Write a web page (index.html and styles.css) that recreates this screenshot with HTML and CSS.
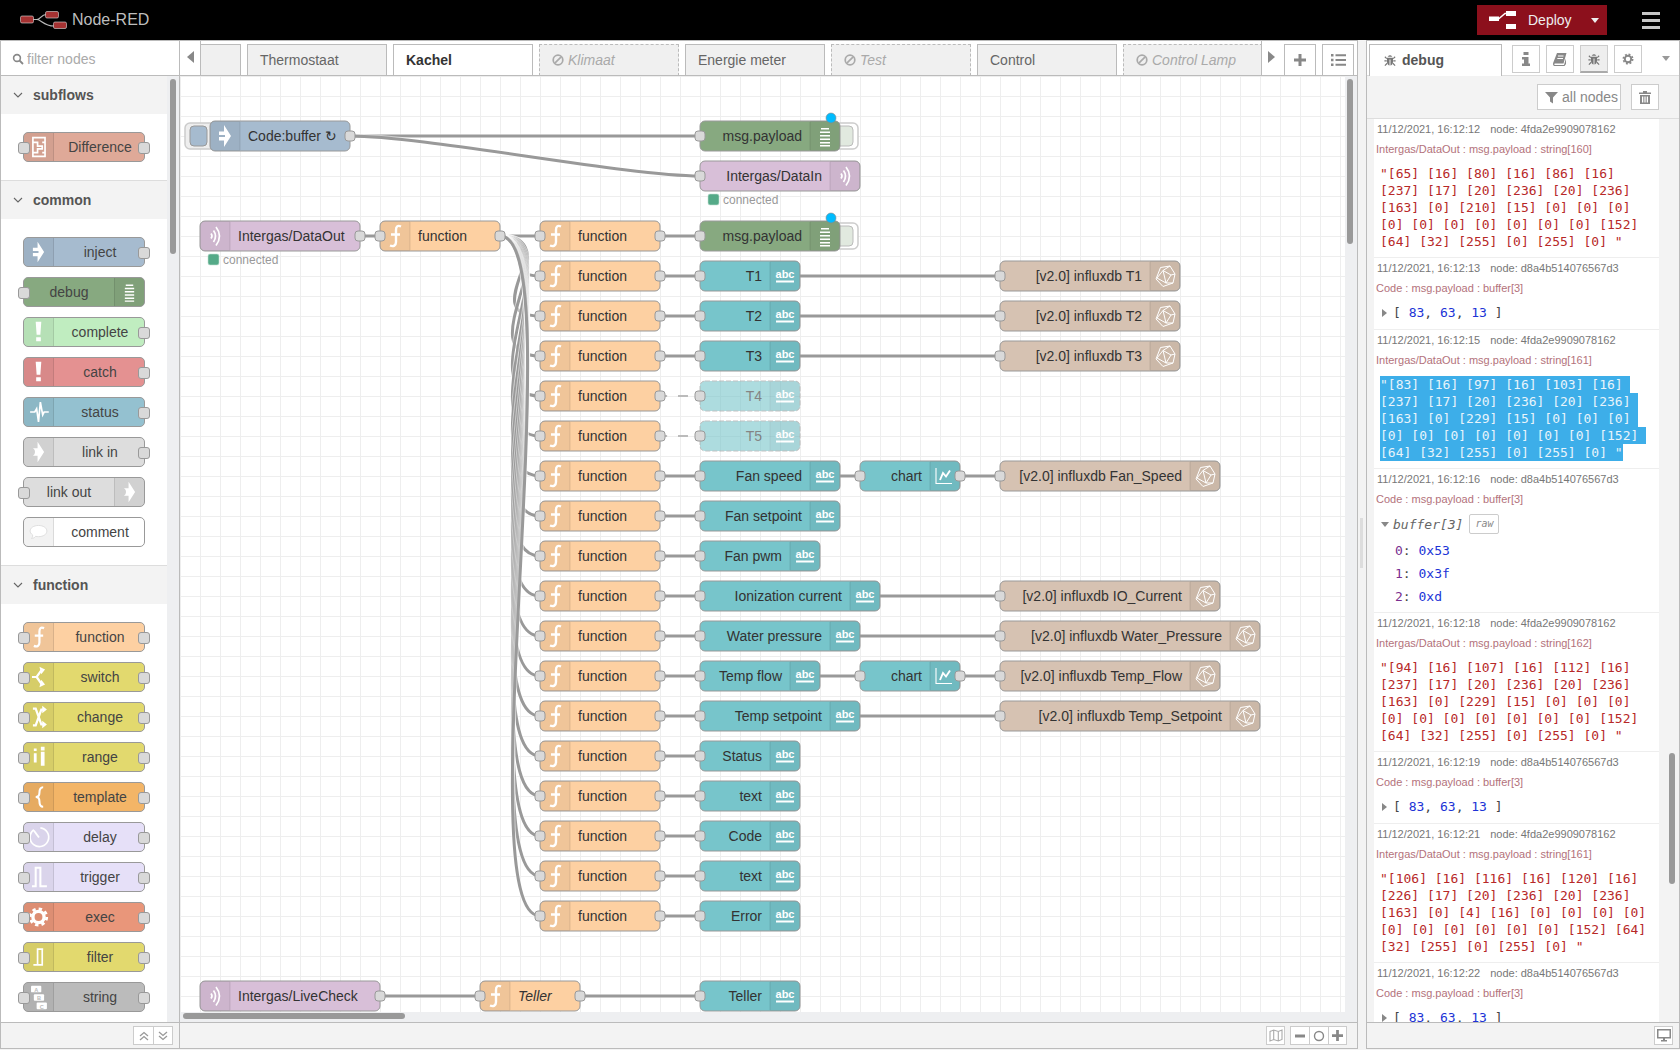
FILE: index.html
```html
<!DOCTYPE html>
<html lang="en">
<head>
  <meta charset="UTF-8">
  <title>Node-RED</title>
  <link rel="stylesheet" href="styles.css">
</head>
<body>
  <svg class="defs" width="0" height="0">
    <defs>
      <symbol id="i-inject" viewBox="0 0 30 30"><path d="M14 4 L21 15 L14 26 V19.5 H9 V16 H15 V14 H9 V10.5 H14 Z" fill="#fff"/></symbol>
      <symbol id="i-debug" viewBox="0 0 30 30"><path d="M11 7h8v1.5h-8zM10 10.5h10V12H10zM10 14h10v1.5H10zM10 17.5h10V19H10zM10 21h10v1.5H10zM10 24h10v1.5H10z" fill="#fff"/></symbol>
      <symbol id="i-alert" viewBox="0 0 30 30"><path d="M12 4h6l-1 14h-4zM12.5 20.5h5V25h-5z" fill="#fff"/></symbol>
      <symbol id="i-status" viewBox="0 0 30 30"><path d="M6 15H11L13 11.5L15 25.5L17 4.5L19.5 18L21 15H26" fill="none" stroke="#fff" stroke-width="1.8"/></symbol>
      <symbol id="i-link" viewBox="0 0 30 30"><path d="M14 4 L21 15 L14 26 V19 H9 C12 17.5 12 12.5 9 11 H14 Z" fill="#fff"/></symbol>
      <symbol id="i-comment" viewBox="0 0 30 30"><path d="M15 8C20 8 24 10.5 24 14C24 17.5 20 20 15 20C14 20 13 20 12 19.6C11 21 9 22 7.5 22C8.5 21 9 19.5 8.6 18C7 17 6 15.5 6 14C6 10.5 10 8 15 8Z" fill="#fff" stroke="#ddd"/></symbol>
      <symbol id="i-func" viewBox="0 0 30 30"><path d="M21 5.500C17.500 4 16 5.500 16 9V21C16 24.500 13.500 26 10 24.500M11 13.500H20" fill="none" stroke="#fff" stroke-width="2.400"/></symbol>
      <symbol id="i-switch" viewBox="0 0 30 30"><path d="M8 15H13L18 8M13 15L18 22" fill="none" stroke="#fff" stroke-width="2.4"/><path d="M16 4L22 7L18 12ZM16 26L22 23L18 18Z" fill="#fff"/></symbol>
      <symbol id="i-change" viewBox="0 0 30 30"><path d="M9 6L12 6L18 23L20 23M9 24L12 24L18 7L20 7" fill="none" stroke="#fff" stroke-width="2.4"/><path d="M19 3L24 7L19 11ZM19 19L24 23L19 27Z" fill="#fff"/></symbol>
      <symbol id="i-range" viewBox="0 0 30 30"><path d="M10 6h3v2.5h-3zM10 11h3v10h-3zM17.5 4h4v4h-4zM17.5 9.500h4V24.500h-4z" fill="#fff"/></symbol>
      <symbol id="i-template" viewBox="0 0 30 30"><path d="M20 4.500C16.500 4.500 16 7.500 16 10.500C16 13.500 15 15 12 15C15 15 16 16.500 16 19.500C16 22.500 16.500 25.500 20 25.500" fill="none" stroke="#fff" stroke-width="2.2"/></symbol>
      <symbol id="i-delay" viewBox="0 0 30 30"><path d="M10 7.200A10 10 0 1 0 17 5.300" fill="none" stroke="#fff" stroke-width="1.800"/><path d="M15.500 15.500L10 8" fill="none" stroke="#fff" stroke-width="2"/></symbol>
      <symbol id="i-trigger" viewBox="0 0 30 30"><path d="M8 25H12V5H17V25H24" fill="none" stroke="#fff" stroke-width="2.200"/></symbol>
      <symbol id="i-gear" viewBox="0 0 30 30"><circle cx="15" cy="15" r="6" fill="none" stroke="currentColor" stroke-width="3.600"/><circle cx="15" cy="15" r="8.800" fill="none" stroke="currentColor" stroke-width="3" stroke-dasharray="3.600 3.300"/></symbol>
      <symbol id="i-filter" viewBox="0 0 30 30"><path d="M9.500 23.500H14V6.500H20M19 6.500V23.500H14" fill="none" stroke="#fff" stroke-width="1.800"/></symbol>
      <symbol id="i-string" viewBox="0 0 30 30">
        <rect x="7" y="3" width="11" height="7" rx="1" fill="#fff"/><rect x="10" y="12" width="11" height="7" rx="1" fill="#fff"/><rect x="13" y="21" width="11" height="7" rx="1" fill="#fff"/>
        <text x="12.500" y="9.500" text-anchor="middle" class="abc-small">A</text><text x="15.500" y="18.500" text-anchor="middle" class="abc-small">B</text><text x="18.500" y="27.500" text-anchor="middle" class="abc-small">C</text>
      </symbol>
      <symbol id="i-subflow" viewBox="0 0 30 30"><path d="M9 5H22V25H9ZM9 10H14V14H19V17H14V21H9M19 10H22M19 21H22" fill="none" stroke="#fff" stroke-width="1.800"/></symbol>
      <symbol id="i-mqtt" viewBox="0 0 30 30"><path d="M11 12.500Q13 15 11 17.500M13.500 9.500Q17.500 15 13.500 21M16 6Q23 15 16 24.500" fill="none" stroke="#fff" stroke-width="1.700"/></symbol>
      <symbol id="i-text" viewBox="0 0 30 30"><text x="15" y="17" text-anchor="middle" class="abc">abc</text><rect x="6" y="19.500" width="18" height="2" fill="#fff"/></symbol>
      <symbol id="i-chart" viewBox="0 0 30 30"><path d="M6 7V22.500H22" fill="none" stroke="#fff" stroke-width="1.100"/><path d="M10 19L13 12L16 15.500L20 9.500" fill="none" stroke="#fff" stroke-width="1.900"/></symbol>
      <symbol id="i-influx" viewBox="0 0 30 30"><path d="M10.500 6.500L20 5L25 13L23 22L13 25.500L6 18ZM13 9.500L21 14L16 22L7 17ZM13 9.500L20 5M21 14L25 13M16 22L23 22M13 9.500L16 22" fill="none" stroke="#fff" stroke-width="1"/></symbol>
      <symbol id="i-bug" viewBox="0 0 30 30"><path d="M10 8Q15 2 20 8ZM8.500 10H21.500V19C21.500 24 18 27 16 27V14H14V27C12 27 8.500 24 8.500 19Z" fill="currentColor"/><path d="M8 12L4 8M22 12L26 8M8 17H3M22 17H27M9 22L4 27M21 22L26 27" fill="none" stroke="currentColor" stroke-width="2.400"/></symbol>
      <symbol id="i-ban" viewBox="0 0 12 12"><circle cx="6" cy="6" r="4.800" fill="none" stroke="currentColor" stroke-width="1.700"/><path d="M2.800 9.200L9.200 2.800" stroke="currentColor" stroke-width="1.700"/></symbol>
    </defs>
  </svg>

  <header class="topbar">
    <div class="brand">
      <svg width="48" height="18" viewBox="0 0 48 18">
        <path d="M13 8.500H17C21 8.500 21 3.500 26 3.500M17 8.500C21 8.500 24 15 34 15" fill="none" stroke="#bbb" stroke-width="1.200"/>
        <rect x="0.500" y="5" width="13" height="7" rx="1.500" fill="#a53232" stroke="#ddd" stroke-width=".6"/>
        <rect x="25.500" y="0.500" width="13" height="6.500" rx="1.500" fill="#a53232" stroke="#ddd" stroke-width=".6"/>
        <rect x="33.500" y="11" width="13" height="6.500" rx="1.500" fill="#a53232" stroke="#ddd" stroke-width=".6"/>
      </svg>
      <span>Node-RED</span>
    </div>
    <div class="top-actions">
      <div class="deploy">
        <svg width="28" height="18" viewBox="0 0 28 18"><path d="M0 5.500H10V10H0ZM17 0H27V5H17ZM17 13H27V18H17Z" fill="#fff"/><path d="M9.500 8L16 2.500H18" fill="none" stroke="#fff" stroke-width="1.500"/></svg>
        <span class="deploy-label">Deploy</span>
        <i class="caret-down"></i>
      </div>
      <div class="menu-btn"><i></i><i></i><i></i></div>
    </div>
  </header>

  <main class="main">
    <aside class="palette">
      <div class="palette-search">
        <svg width="12" height="12" viewBox="0 0 12 12"><circle cx="5" cy="5" r="3.400" fill="none" stroke="#888" stroke-width="1.600"/><path d="M7.500 7.500L11 11" stroke="#888" stroke-width="1.800"/></svg>
        <input type="text" placeholder="filter nodes">
      </div>
      <div class="palette-body">
        <div class="palette-list">
          <h3 class="cat-head"><svg width="10" height="6" viewBox="0 0 10 6"><path d="M1 1L5 5L9 1" fill="none" stroke="#666" stroke-width="1.100"/></svg>subflows</h3>
          <div class="cat-nodes">
            <div class="pnode c-subflow in out"><div class="pnode-icon"><svg><use href="#i-subflow"/></svg></div><span>Difference</span></div>
          </div>
          <h3 class="cat-head"><svg width="10" height="6" viewBox="0 0 10 6"><path d="M1 1L5 5L9 1" fill="none" stroke="#666" stroke-width="1.100"/></svg>common</h3>
          <div class="cat-nodes">
            <div class="pnode c-inject out"><div class="pnode-icon"><svg><use href="#i-inject"/></svg></div><span>inject</span></div>
            <div class="pnode c-debug in rev"><div class="pnode-icon"><svg><use href="#i-debug"/></svg></div><span>debug</span></div>
            <div class="pnode c-complete out"><div class="pnode-icon"><svg><use href="#i-alert"/></svg></div><span>complete</span></div>
            <div class="pnode c-catch out"><div class="pnode-icon"><svg><use href="#i-alert"/></svg></div><span>catch</span></div>
            <div class="pnode c-status out"><div class="pnode-icon"><svg><use href="#i-status"/></svg></div><span>status</span></div>
            <div class="pnode c-link out"><div class="pnode-icon"><svg><use href="#i-link"/></svg></div><span>link in</span></div>
            <div class="pnode c-link in rev"><div class="pnode-icon"><svg><use href="#i-link"/></svg></div><span>link out</span></div>
            <div class="pnode c-comment"><div class="pnode-icon"><svg><use href="#i-comment"/></svg></div><span>comment</span></div>
          </div>
          <h3 class="cat-head"><svg width="10" height="6" viewBox="0 0 10 6"><path d="M1 1L5 5L9 1" fill="none" stroke="#666" stroke-width="1.100"/></svg>function</h3>
          <div class="cat-nodes">
            <div class="pnode c-function in out"><div class="pnode-icon"><svg><use href="#i-func"/></svg></div><span>function</span></div>
            <div class="pnode c-switch in out"><div class="pnode-icon"><svg><use href="#i-switch"/></svg></div><span>switch</span></div>
            <div class="pnode c-switch in out"><div class="pnode-icon"><svg><use href="#i-change"/></svg></div><span>change</span></div>
            <div class="pnode c-switch in out"><div class="pnode-icon"><svg><use href="#i-range"/></svg></div><span>range</span></div>
            <div class="pnode c-template in out"><div class="pnode-icon"><svg><use href="#i-template"/></svg></div><span>template</span></div>
            <div class="pnode c-delay in out"><div class="pnode-icon"><svg><use href="#i-delay"/></svg></div><span>delay</span></div>
            <div class="pnode c-delay in out"><div class="pnode-icon"><svg><use href="#i-trigger"/></svg></div><span>trigger</span></div>
            <div class="pnode c-exec in out"><div class="pnode-icon"><svg><use href="#i-gear"/></svg></div><span>exec</span></div>
            <div class="pnode c-switch in out"><div class="pnode-icon"><svg><use href="#i-filter"/></svg></div><span>filter</span></div>
            <div class="pnode c-string in out"><div class="pnode-icon"><svg><use href="#i-string"/></svg></div><span>string</span></div>
            <div class="pnode c-string"></div>
          </div>
        </div>
        <div class="thumb palette-thumb"></div>
      </div>
      <div class="panel-footer">
        <div class="btn-group">
          <div class="foot-btn"><svg width="10" height="10" viewBox="0 0 10 10"><path d="M1 5L5 1.500L9 5M1 9L5 5.500L9 9" fill="none" stroke="#999" stroke-width="1.300"/></svg></div>
          <div class="foot-btn"><svg width="10" height="10" viewBox="0 0 10 10"><path d="M1 1L5 4.500L9 1M1 5L5 8.500L9 5" fill="none" stroke="#999" stroke-width="1.300"/></svg></div>
        </div>
      </div>
    </aside>

    <section class="workspace">
      <div class="tabs-row">
        <div class="tab-scroll"><i class="arrow-left"></i></div>
        <div class="tabs">
          <div class="tab tab-cut"></div>
          <div class="tab">Thermostaat</div>
          <div class="tab active">Kachel</div>
          <div class="tab off"><svg width="12" height="12"><use href="#i-ban"/></svg>Klimaat</div>
          <div class="tab">Energie meter</div>
          <div class="tab off"><svg width="12" height="12"><use href="#i-ban"/></svg>Test</div>
          <div class="tab">Control</div>
          <div class="tab off"><svg width="12" height="12"><use href="#i-ban"/></svg>Control Lamp</div>
        </div>
        <div class="tab-scroll right"><i class="arrow-right"></i></div>
        <div class="tab-btn"><svg width="12" height="12" viewBox="0 0 12 12"><path d="M4.500 0h3v4.500H12v3H7.500V12h-3V7.500H0v-3h4.500z" fill="#888"/></svg></div>
        <div class="tab-btn"><svg width="15" height="12" viewBox="0 0 15 12"><path d="M0 0h2.500v2.500H0zM0 4.700h2.500v2.500H0zM0 9.400h2.500v2.500H0zM4.500 .300H15v2H4.500zM4.500 5H15v2H4.500zM4.500 9.700H15v2H4.500z" fill="#888"/></svg></div>
      </div>
      <div class="canvas-wrap">
        <svg id="flow" class="flow" width="1165" height="936" viewBox="180 76 1165 936"></svg>
        <div class="thumb canvas-vthumb"></div>
        <div class="thumb canvas-hthumb"></div>
      </div>
      <div class="panel-footer workspace-footer">
        <div class="foot-btn solo"><svg width="14" height="13" viewBox="0 0 14 13"><path d="M1 2.500L4.700 1L9.300 2.500L13 1V10.500L9.300 12L4.700 10.500L1 12ZM4.700 1V10.500M9.300 2.500V12" fill="none" stroke="#aaa" stroke-width="1.100"/></svg></div>
        <div class="btn-group zoom-group">
          <div class="foot-btn"><svg width="10" height="10" viewBox="0 0 10 10"><path d="M0 3.500h10v3H0z" fill="#888"/></svg></div>
          <div class="foot-btn"><svg width="12" height="12" viewBox="0 0 12 12"><circle cx="6" cy="6" r="4.500" fill="none" stroke="#888" stroke-width="1.400"/></svg></div>
          <div class="foot-btn"><svg width="11" height="11" viewBox="0 0 12 12"><path d="M4.500 0h3v4.500H12v3H7.500V12h-3V7.500H0v-3h4.500z" fill="#888"/></svg></div>
        </div>
      </div>
    </section>

    <div class="separator"><div class="separator-handle"></div></div>

    <aside class="sidebar">
      <div class="side-tabs">
        <div class="side-tab"><svg width="14" height="14" color="#777"><use href="#i-bug"/></svg>debug</div>
        <div class="side-btns">
          <div class="side-btn"><svg width="10" height="14" viewBox="0 0 10 14"><path d="M2.500 0h5v3h-5zM1 5h6.500v6.500H9V14H1v-2.500h2V7.500H1z" fill="#888"/></svg></div>
          <div class="side-btn"><svg width="14" height="14" viewBox="0 0 14 14"><path d="M4 1H13.500L10.500 11.500H2C1 11.500 1 13 2 13H11L13 6.500V12L11.500 14H2C0 14 -.5 12 .5 10Z" fill="#888"/><path d="M5 4H10.500M4.300 6.500H10" stroke="#fff"/></svg></div>
          <div class="side-btn current"><svg width="14" height="14" color="#777"><use href="#i-bug"/></svg></div>
          <div class="side-btn"><svg width="16" height="16"><use href="#i-gear"/></svg></div>
          <i class="caret-side"></i>
        </div>
      </div>
      <div class="debug-toolbar">
        <div class="tool-btn">
          <svg width="13" height="13" viewBox="0 0 13 13"><path d="M0 1H13L8 6.500V12.500L5 10.500V6.500Z" fill="#888"/></svg>
          <span>all nodes</span>
        </div>
        <div class="tool-btn trash">
          <svg width="12" height="13" viewBox="0 0 12 13"><path d="M4 0H8V1.500H12V3H0V1.500H4ZM1 4H11V13H1ZM3 5.500V11.500H4.300V5.500ZM5.400 5.500V11.500H6.600V5.500ZM7.700 5.500V11.500H9V5.500Z" fill="#888" fill-rule="evenodd"/></svg>
        </div>
      </div>
      <div class="debug-wrap">
        <div class="debug-list">
          <div class="msg">
            <div class="msg-meta"><span>11/12/2021, 16:12:12</span><span>node: 4fda2e9909078162</span></div>
            <div class="msg-name">Intergas/DataOut : msg.payload : string[160]</div>
            <div class="msg-body str">
              <div>"[65] [16] [80] [16] [86] [16]</div>
              <div>[237] [17] [20] [236] [20] [236]</div>
              <div>[163] [0] [210] [15] [0] [0] [0]</div>
              <div>[0] [0] [0] [0] [0] [0] [0] [152]</div>
              <div>[64] [32] [255] [0] [255] [0] "</div>
            </div>
          </div>
          <div class="msg">
            <div class="msg-meta"><span>11/12/2021, 16:12:13</span><span>node: d8a4b514076567d3</span></div>
            <div class="msg-name">Code : msg.payload : buffer[3]</div>
            <div class="msg-body arr"><i class="caret-right"></i>[ <b>83</b>, <b>63</b>, <b>13</b> ]</div>
          </div>
          <div class="msg">
            <div class="msg-meta"><span>11/12/2021, 16:12:15</span><span>node: 4fda2e9909078162</span></div>
            <div class="msg-name">Intergas/DataOut : msg.payload : string[161]</div>
            <div class="msg-body str picked">
              <div>"[83] [16] [97] [16] [103] [16] </div>
              <div>[237] [17] [20] [236] [20] [236] </div>
              <div>[163] [0] [229] [15] [0] [0] [0] </div>
              <div>[0] [0] [0] [0] [0] [0] [0] [152] </div>
              <div>[64] [32] [255] [0] [255] [0] "</div>
            </div>
          </div>
          <div class="msg">
            <div class="msg-meta"><span>11/12/2021, 16:12:16</span><span>node: d8a4b514076567d3</span></div>
            <div class="msg-name">Code : msg.payload : buffer[3]</div>
            <div class="msg-body buf">
              <div class="buf-head"><i class="caret-open"></i><em>buffer[3]</em><span class="raw-btn">raw</span></div>
              <div class="buf-row"><u>0</u>: <b>0x53</b></div>
              <div class="buf-row"><u>1</u>: <b>0x3f</b></div>
              <div class="buf-row"><u>2</u>: <b>0xd</b></div>
            </div>
          </div>
          <div class="msg">
            <div class="msg-meta"><span>11/12/2021, 16:12:18</span><span>node: 4fda2e9909078162</span></div>
            <div class="msg-name">Intergas/DataOut : msg.payload : string[162]</div>
            <div class="msg-body str">
              <div>"[94] [16] [107] [16] [112] [16]</div>
              <div>[237] [17] [20] [236] [20] [236]</div>
              <div>[163] [0] [229] [15] [0] [0] [0]</div>
              <div>[0] [0] [0] [0] [0] [0] [0] [152]</div>
              <div>[64] [32] [255] [0] [255] [0] "</div>
            </div>
          </div>
          <div class="msg">
            <div class="msg-meta"><span>11/12/2021, 16:12:19</span><span>node: d8a4b514076567d3</span></div>
            <div class="msg-name">Code : msg.payload : buffer[3]</div>
            <div class="msg-body arr"><i class="caret-right"></i>[ <b>83</b>, <b>63</b>, <b>13</b> ]</div>
          </div>
          <div class="msg">
            <div class="msg-meta"><span>11/12/2021, 16:12:21</span><span>node: 4fda2e9909078162</span></div>
            <div class="msg-name">Intergas/DataOut : msg.payload : string[161]</div>
            <div class="msg-body str">
              <div>"[106] [16] [116] [16] [120] [16]</div>
              <div>[226] [17] [20] [236] [20] [236]</div>
              <div>[163] [0] [4] [16] [0] [0] [0] [0]</div>
              <div>[0] [0] [0] [0] [0] [0] [152] [64]</div>
              <div>[32] [255] [0] [255] [0] "</div>
            </div>
          </div>
          <div class="msg">
            <div class="msg-meta"><span>11/12/2021, 16:12:22</span><span>node: d8a4b514076567d3</span></div>
            <div class="msg-name">Code : msg.payload : buffer[3]</div>
            <div class="msg-body arr"><i class="caret-right"></i>[ <b>83</b>, <b>63</b>, <b>13</b> ]</div>
          </div>
        </div>
        <div class="thumb debug-thumb"></div>
      </div>
      <div class="panel-footer side-footer">
        <div class="foot-btn solo"><svg width="14" height="13" viewBox="0 0 14 13"><path d="M0 0H14V9.500H0ZM1.500 1.500V8H12.500V1.500ZM4 11H10V12.500H4ZM6 9.500H8V11H6Z" fill="#888" fill-rule="evenodd"/></svg></div>
      </div>
    </aside>
  </main>

  <script src="flow.js"></script>
</body>
</html>
```

FILE: styles.css
```css
* { box-sizing: border-box; }
body {
  margin: 0;
  height: 1050px;
  overflow: hidden;
  background: #f3f3f3;
  font-family: "Liberation Sans", Arial, sans-serif;
  font-size: 14px;
  color: #333;
}
.defs { position: absolute; }
.abc { font: bold 11px "Liberation Sans", Arial, sans-serif; fill: #fff; }
.abc-small { font: bold 6px "Liberation Sans", Arial, sans-serif; fill: #bbb; }

/* header */
.topbar {
  height: 40px;
  background: #000;
  display: flex;
  justify-content: space-between;
  align-items: center;
}
.brand {
  display: flex;
  align-items: center;
  gap: 4px;
  padding-left: 20px;
  color: #bdbdbd;
  font-size: 16px;
}
.top-actions { display: flex; align-items: center; }
.deploy {
  width: 130px;
  height: 30px;
  background: #8c101c;
  color: #eee;
  display: flex;
  align-items: center;
  padding-left: 12px;
}
.deploy-label { margin-left: 11px; }
.caret-down {
  margin-left: 19px;
  border: 4px solid transparent;
  border-top: 5px solid #eee;
  border-bottom: 0;
}
.menu-btn { width: 18px; margin: 0 20px 0 35px; }
.menu-btn i { display: block; height: 3px; margin: 4px 0; background: #c7c7c7; }

.main { display: flex; height: 1009px; }

/* palette */
.palette {
  width: 180px;
  display: flex;
  flex-direction: column;
  background: #eeeff1;
  border: 1px solid #bbb;
}
.palette-search {
  height: 35px;
  flex: none;
  background: #fff;
  border-bottom: 1px solid #bbb;
  display: flex;
  align-items: center;
  padding: 2px 0 0 11px;
}
.palette-search input {
  border: 0;
  outline: 0;
  padding: 0 0 0 3px;
  width: 130px;
  font: 14px "Liberation Sans", Arial, sans-serif;
}
.palette-search input::placeholder { color: #aaa; opacity: 1; }
.palette-body { flex: 1; position: relative; overflow: hidden; }
.palette-list { width: 166px; height: 100%; overflow: hidden; background: #fff; }
.cat-head {
  margin: 0;
  height: 38px;
  background: #f3f3f3;
  display: flex;
  align-items: center;
  gap: 10px;
  padding-left: 12px;
  font-size: 14px;
  font-weight: bold;
  color: #555;
}
.cat-nodes { padding: 18px 0 8px 22px; border-bottom: 1px solid #ddd; }
.cat-nodes:last-child { border-bottom: 0; }
.pnode {
  position: relative;
  width: 122px;
  height: 30px;
  margin-bottom: 10px;
  display: flex;
  border: 1px solid #999;
  border-radius: 5px;
}
.pnode.rev { flex-direction: row-reverse; }
.pnode-icon {
  width: 30px;
  flex: none;
  background: rgba(0,0,0,0.05);
  border-right: 1px solid rgba(0,0,0,0.1);
  border-radius: 4px 0 0 4px;
  color: #fff;
}
.pnode-icon svg { display: block; width: 29px; height: 28px; }
.rev .pnode-icon {
  border-right: 0;
  border-left: 1px solid rgba(0,0,0,0.1);
  border-radius: 0 4px 4px 0;
}
.pnode span { flex: 1; text-align: center; line-height: 28px; color: #444; padding-left: 2px; }
.rev span { padding-left: 0; }
.pnode.in::before, .pnode.out::after {
  content: "";
  position: absolute;
  top: 9px;
  width: 10px;
  height: 10px;
  background: #d9d9d9;
  border: 1px solid #999;
  border-radius: 3px;
}
.pnode.in::before { left: -6px; }
.pnode.out::after { right: -6px; }
.c-subflow { background: #dfa998; }
.c-inject { background: #a6bbcf; }
.c-debug { background: #87a980; }
.c-complete { background: #c0edc0; }
.c-catch { background: #e49191; }
.c-status { background: #94c1d0; }
.c-link { background: #ddd; }
.c-comment { background: #fff; }
.c-function { background: #fdd0a2; }
.c-switch { background: #e2d96e; }
.c-template { background: #f3b567; }
.c-delay { background: #e6e0f8; }
.c-exec { background: #e9967a; }
.c-string { background: #bbb; }

.thumb { position: absolute; background: #999; border-radius: 3px; }
.palette-thumb { left: 169px; top: 3px; width: 6px; height: 175px; }

.panel-footer {
  height: 26px;
  flex: none;
  display: flex;
  justify-content: flex-end;
  align-items: center;
  background: #f3f3f3;
  border-top: 1px solid #bbb;
}
.palette .panel-footer { padding-right: 6px; }
.btn-group { display: flex; border: 1px solid #ccc; background: #fff; height: 19px; }
.foot-btn {
  width: 19px;
  height: 100%;
  display: flex;
  align-items: center;
  justify-content: center;
}
.btn-group .foot-btn + .foot-btn { border-left: 1px solid #ccc; }
.foot-btn.solo { border: 1px solid #ccc; background: #fff; height: 19px; }

/* workspace */
.workspace {
  width: 1178px;
  display: flex;
  flex-direction: column;
  border-top: 1px solid #bbb;
  border-right: 1px solid #bbb;
  border-bottom: 1px solid #bbb;
}
.tabs-row {
  height: 35px;
  flex: none;
  display: flex;
  background: #fff;
  border-bottom: 1px solid #bbb;
}
.tab-scroll {
  width: 21px;
  flex: none;
  border-right: 1px solid #bbb;
  display: flex;
  padding: 10px 0 0 7px;
}
.tab-scroll.right { width: 23px; border-right: 0; border-left: 1px solid #bbb; padding-left: 6px; }
.arrow-left { border: 6px solid transparent; border-left: 0; border-right: 7px solid #888; height: 0; }
.arrow-right { border: 6px solid transparent; border-right: 0; border-left: 7px solid #888; height: 0; }
.tabs { width: 1060px; flex: none; display: flex; gap: 6px; overflow: hidden; padding-top: 3px; }
.tab {
  width: 140px;
  height: 32px;
  flex: none;
  background: #f0f0f0;
  border: 1px solid #bbb;
  border-bottom: 0;
  padding: 0 0 2px 12px;
  color: #666;
  display: flex;
  align-items: center;
}
.tab-cut { margin-left: -100px; }
.tab.active { background: #fff; color: #333; font-weight: bold; z-index: 1; }
.tab.off { border-style: dashed; border-bottom: 0; color: #aaa; font-style: italic; }
.tab.off svg { margin-right: 4px; }
.tab-btn {
  width: 32px;
  height: 31px;
  margin: 3px 3px 0 0;
  flex: none;
  border: 1px solid #bbb;
  border-bottom: 0;
  display: flex;
  align-items: center;
  justify-content: center;
}
.tab-btn + .tab-btn { margin-left: 3px; }
.canvas-wrap { flex: 1; position: relative; background: #eeeff1; overflow: hidden; }
.flow {
  display: block;
  background-color: #fff;
  background-image: linear-gradient(#eee 1px, transparent 1px), linear-gradient(90deg, #eee 1px, transparent 1px);
  background-size: 20px 20px;
  font-family: "Liberation Sans", Arial, sans-serif;
}
.canvas-vthumb { left: 1167px; top: 3px; width: 6px; height: 165px; }
.canvas-hthumb { left: 3px; top: 937px; width: 222px; height: 6px; }
.workspace-footer { padding-right: 10px; gap: 5px; }
.workspace-footer .btn-group { width: 57px; }

.separator { width: 8px; flex: none; position: relative; background: #f3f3f3; }
.separator-handle { position: absolute; left: 2px; top: 478px; width: 3px; height: 50px; background: #ddd; }

/* debug sidebar */
.sidebar {
  flex: 1;
  display: flex;
  flex-direction: column;
  background: #f3f3f3;
  border: 1px solid #bbb;
  min-width: 0;
}
.side-tabs {
  height: 35px;
  flex: none;
  display: flex;
  background: #fff;
  border-bottom: 1px solid #ddd;
}
.side-tab {
  width: 133px;
  height: 32px;
  margin: 3px 0 0 2px;
  border: 1px solid #bbb;
  border-bottom: 0;
  background: #fff;
  display: flex;
  align-items: center;
  gap: 5px;
  padding: 0 0 2px 13px;
  font-weight: bold;
  color: #555;
  z-index: 1;
}
.side-btns { display: flex; gap: 6px; margin-left: 10px; padding-top: 4px; }
.side-btn {
  width: 28px;
  height: 28px;
  border: 1px solid #ccc;
  display: flex;
  align-items: center;
  justify-content: center;
  color: #888;
}
.side-btn.current { background: #eee; border-bottom: 2px solid #aaa; }
.caret-side {
  margin: 11px 0 0 14px;
  height: 0;
  border: 4px solid transparent;
  border-top: 5px solid #999;
  border-bottom: 0;
}
.debug-toolbar {
  height: 43px;
  flex: none;
  display: flex;
  justify-content: flex-end;
  gap: 10px;
  padding: 8px 20px 0 0;
  border-bottom: 1px solid #ddd;
}
.tool-btn {
  height: 26px;
  display: flex;
  align-items: center;
  gap: 4px;
  padding: 0 0 0 7px;
  width: 84px;
  background: #fff;
  border: 1px solid #ccc;
  color: #888;
  white-space: nowrap;
}
.tool-btn.trash { width: 28px; justify-content: center; padding: 0; }
.debug-wrap { flex: 1; position: relative; overflow: hidden; }
.debug-list { width: 285px; margin-left: 7px; height: 100%; overflow: hidden; background: #fff; }
.debug-thumb { left: 302px; top: 634px; width: 6px; height: 131px; }
.msg { border-bottom: 1px solid #eee; padding: 2px 0 7px 3px; }
.msg-meta { height: 16px; line-height: 16px; font-size: 11px; color: #777; display: flex; gap: 10px; }
.msg-name { margin: 2px 0 6px -1px; height: 20px; line-height: 20px; font-size: 11px; color: #b3727b; }
.msg-body { font: 13px/17px "DejaVu Sans Mono", monospace; padding-left: 3px; }
.str { color: #b72828; }
.str div { white-space: pre; }
.str.picked { color: #e8f4fb; }
.str.picked div { width: fit-content; background: #3daee9; }
.arr { color: #444; height: 18px; line-height: 18px; padding-left: 5px; white-space: pre; }
.arr b { font-weight: normal; color: #2033d6; }
.caret-right {
  display: inline-block;
  margin-right: 6px;
  border: 4px solid transparent;
  border-right: 0;
  border-left: 5px solid #888;
}
.buf { height: 93px; margin-top: -3px; }
.buf-head { display: flex; align-items: center; height: 24px; color: #666; padding-left: 1px; margin-bottom: 3px; }
.caret-open {
  margin-right: 4px;
  border: 4px solid transparent;
  border-bottom: 0;
  border-top: 5px solid #888;
}
.buf-head em { margin-right: 6px; }
.raw-btn {
  width: 30px;
  height: 20px;
  border: 1px solid #ccc;
  border-radius: 2px;
  text-align: center;
  font-size: 10px;
  line-height: 18px;
  font-style: italic;
  color: #888;
}
.buf-row { height: 23px; line-height: 23px; padding-left: 15px; color: #444; white-space: pre; }
.buf-row u { text-decoration: none; color: #792e90; }
.buf-row b { font-weight: normal; color: #2033d6; }
.side-footer { padding-right: 6px; }
```

FILE: flow.js
```js
const TYPES = {
  inject:  { fill: '#a6bbcf', icon: 'i-inject', out: 1 },
  debug:   { fill: '#87a980', icon: 'i-debug', right: 1, in: 1 },
  mqttin:  { fill: '#d8bfd8', icon: 'i-mqtt', out: 1 },
  mqttout: { fill: '#d8bfd8', icon: 'i-mqtt', right: 1, in: 1 },
  func:    { fill: '#fdd0a2', icon: 'i-func', in: 1, out: 1 },
  text:    { fill: '#77c5cb', icon: 'i-text', right: 1, in: 1 },
  chart:   { fill: '#77c5cb', icon: 'i-chart', right: 1, in: 1, out: 1 },
  influx:  { fill: '#d6c2b2', icon: 'i-influx', right: 1, in: 1 }
};

// [type, left x, centre y, width, label, options]
const NODES = [
  ['inject', 210, 136, 140, 'Code:buffer ↻', { btn: 'left' }],
  ['debug', 700, 136, 140, 'msg.payload', { btn: 'right', changed: 1 }],
  ['mqttout', 700, 176, 160, 'Intergas/DataIn', { status: 1 }],
  ['mqttin', 200, 236, 160, 'Intergas/DataOut', { status: 1 }],
  ['func', 380, 236, 120, 'function'],
  ['debug', 700, 236, 140, 'msg.payload', { btn: 'right', changed: 1 }],
  ['text', 700, 276, 100, 'T1'],
  ['text', 700, 316, 100, 'T2'],
  ['text', 700, 356, 100, 'T3'],
  ['text', 700, 396, 100, 'T4', { off: 1 }],
  ['text', 700, 436, 100, 'T5', { off: 1 }],
  ['text', 700, 476, 140, 'Fan speed'],
  ['text', 700, 516, 140, 'Fan setpoint'],
  ['text', 700, 556, 120, 'Fan pwm'],
  ['text', 700, 596, 180, 'Ionization current'],
  ['text', 700, 636, 160, 'Water pressure'],
  ['text', 700, 676, 120, 'Temp flow'],
  ['text', 700, 716, 160, 'Temp setpoint'],
  ['text', 700, 756, 100, 'Status'],
  ['text', 700, 796, 100, 'text'],
  ['text', 700, 836, 100, 'Code'],
  ['text', 700, 876, 100, 'text'],
  ['text', 700, 916, 100, 'Error'],
  ['chart', 860, 476, 100, 'chart'],
  ['chart', 860, 676, 100, 'chart'],
  ['influx', 1000, 276, 180, '[v2.0] influxdb T1'],
  ['influx', 1000, 316, 180, '[v2.0] influxdb T2'],
  ['influx', 1000, 356, 180, '[v2.0] influxdb T3'],
  ['influx', 1000, 476, 220, '[v2.0] influxdb Fan_Speed'],
  ['influx', 1000, 596, 220, '[v2.0] influxdb IO_Current'],
  ['influx', 1000, 636, 260, '[v2.0] influxdb Water_Pressure'],
  ['influx', 1000, 676, 220, '[v2.0] influxdb Temp_Flow'],
  ['influx', 1000, 716, 260, '[v2.0] influxdb Temp_Setpoint'],
  ['mqttin', 200, 996, 180, 'Intergas/LiveCheck'],
  ['func', 480, 996, 100, 'Teller', { italic: 1 }],
  ['text', 700, 996, 100, 'Teller']
];

for (let y = 236; y <= 916; y += 40) NODES.push(['func', 540, y, 120, 'function']);

// same curve the editor uses: control points 75px out, less when the ends are close
function wire(x1, y1, x2, y2) {
  const dx = x2 - x1, dy = y2 - y1;
  const delta = Math.sqrt(dx * dx + dy * dy);
  const c = delta < 100 ? 0.75 * delta : 75;
  return `M${x1} ${y1}C${x1 + c} ${y1} ${x2 - c} ${y2} ${x2} ${y2}`;
}

const WIRES = [
  [350, 136, 700, 136], [350, 136, 700, 176], [360, 236, 380, 236],
  [960, 476, 1000, 476], [960, 676, 1000, 676],
  [800, 276, 1000, 276], [800, 316, 1000, 316], [800, 356, 1000, 356],
  [840, 476, 860, 476], [880, 596, 1000, 596], [860, 636, 1000, 636],
  [820, 676, 860, 676], [860, 716, 1000, 716],
  [380, 996, 480, 996], [580, 996, 700, 996]
];
for (let y = 236; y <= 916; y += 40) {
  WIRES.push([500, 236, 540, y]);
  WIRES.push([660, y, 700, y, y === 396 || y === 436]);
}

function wireSvg([x1, y1, x2, y2, off]) {
  const d = wire(x1, y1, x2, y2);
  if (off) return `<path d="${d}" fill="none" stroke="#bbb" stroke-width="2" stroke-dasharray="10 11" stroke-dashoffset="3"/>`;
  return `<path d="${d}" fill="none" stroke="#fff" stroke-opacity=".5" stroke-width="5"/>` +
         `<path d="${d}" fill="none" stroke="#999" stroke-width="3"/>`;
}

function port(x, y) {
  return `<rect x="${x - 5}" y="${y - 5}" width="10" height="10" rx="3" fill="#d9d9d9" stroke="#999"/>`;
}

function nodeSvg([type, x, cy, w, label, opts = {}]) {
  const t = TYPES[type];
  const y = cy - 15;
  const iconX = t.right ? x + w - 30 : x;
  const shade = t.right
    ? `M${iconX} ${y}H${x + w - 5}a5 5 0 0 1 5 5V${y + 25}a5 5 0 0 1 -5 5H${iconX}Z`
    : `M${x + 30} ${y}H${x + 5}a5 5 0 0 0 -5 5V${y + 25}a5 5 0 0 0 5 5H${x + 30}Z`;
  const lineX = t.right ? iconX : x + 30;
  const dash = opts.off ? ' stroke-dasharray="5 2"' : '';
  let s = '<g>';
  s += `<g${opts.off ? ' opacity=".6"' : ''}>`;

  if (opts.btn === 'left') {
    s += `<rect x="${x - 25}" y="${y + 2}" width="35" height="26" rx="5" fill="#eee" stroke="#ccc" stroke-width="1.500"/>`;
    s += `<rect x="${x - 20}" y="${y + 5}" width="17" height="20" rx="4" fill="${t.fill}" stroke="#999"/>`;
  }
  if (opts.btn === 'right') {
    s += `<rect x="${x + w - 10}" y="${y + 2}" width="28" height="26" rx="5" fill="#fff" stroke="#ccc" stroke-width="1.500"/>`;
    s += `<rect x="${x + w - 5}" y="${y + 5}" width="18" height="20" rx="4" fill="#e1e9df" stroke="#bbb"/>`;
  }

  s += `<rect x="${x}" y="${y}" width="${w}" height="30" rx="5" fill="${t.fill}" stroke="#999"${dash}/>`;
  s += `<path d="${shade}" fill="#000" fill-opacity=".05"/>`;
  s += `<path d="M${lineX} ${y + 1}V${y + 29}" stroke="#000" stroke-opacity=".1"/>`;
  s += `<use href="#${t.icon}" x="${iconX}" y="${y}" width="30" height="30"/>`;

  const textX = t.right ? x + w - 38 : x + 38;
  s += `<text x="${textX}" y="${cy + 5}" font-size="14" fill="#333"${t.right ? ' text-anchor="end"' : ''}${opts.italic ? ' font-style="italic"' : ''}>${label}</text>`;
  s += '</g>';

  if (t.in) s += port(x, cy);
  if (t.out) s += port(x + w, cy);
  if (opts.changed) s += `<circle cx="${x + w - 9}" cy="${y - 3}" r="5" fill="#00bcff" stroke="#888" stroke-width=".6"/>`;
  if (opts.status) {
    s += `<rect x="${x + 8}" y="${y + 33}" width="11" height="11" rx="2" fill="#55aa88" stroke="#c3e0d5" stroke-width=".6"/>`;
    s += `<text x="${x + 23}" y="${y + 43}" font-size="12" fill="#999">connected</text>`;
  }
  return s + '</g>';
}

document.getElementById('flow').innerHTML =
  WIRES.map(wireSvg).join('') + NODES.map(nodeSvg).join('');
```
